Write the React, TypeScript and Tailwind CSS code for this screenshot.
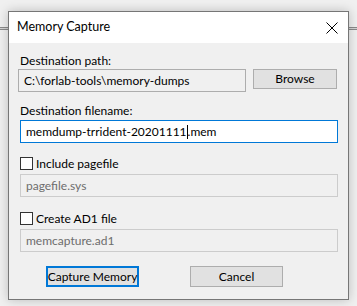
import React from "react";

const font = { fontFamily: 'Lato, "Noto Sans", sans-serif' };

function Checkbox({label}: {label: string}) {
	return (
		<label className="flex items-center h-[13px] text-[12px] text-black">
			<span className="w-[13px] h-[13px] border border-[#333333] bg-white box-border"/>
			<span className="ml-[3px] leading-[13px]">{label}</span>
		</label>
	);
}

function DisabledField({value}: {value: string}) {
	return (
		<div className="ml-[11px] w-[318px] h-[23px] border border-[#cccccc] bg-[#f0f0f0] flex items-center pl-[5px] text-[12px] text-[#6d6d6d]">
			{value}
		</div>
	);
}

export default function App() {
	return (
		<div
			className="w-[357px] h-[306px] overflow-hidden pt-[11px] pl-[8px] bg-[#f0f0f0] bg-[linear-gradient(to_bottom,transparent_27px,#8a8a8a_27px,#8a8a8a_28px,#d4d4d4_28px,#d4d4d4_29px,#8a8a8a_29px,#8a8a8a_30px,transparent_30px)]"
			style={font}
		>
			<div className="w-[341px] h-[289px] border border-[#767676] bg-[#f0f0f0] shadow-[0_0_10px_rgba(0,0,0,0.22)] flex flex-col">
				<div className="h-[31px] bg-white flex items-center justify-between pl-[8px] pr-[8px]">
					<span className="text-[12.5px] text-black">Memory Capture</span>
					<svg width="12" height="12" viewBox="0 0 12 12" className="mr-[2px]">
						<path d="M0.5 0.5 L11.5 11.5 M11.5 0.5 L0.5 11.5" stroke="#000" strokeWidth="1"/>
					</svg>
				</div>
				<div className="flex flex-col text-[12px] text-black">
					<div className="mt-[10px] ml-[11px] h-[16px] leading-[16px]">Destination path:</div>
					<div className="flex items-start">
						<div className="ml-[9px] w-[228px] h-[23px] border border-[#adadad] bg-[#f0f0f0] flex items-center pl-[5px]">
							C:\forlab-tools\memory-dumps
						</div>
						<button className="ml-[7px] w-[84px] h-[20px] border border-[#adadad] bg-[#e1e1e1] text-[12px] text-black">
							Browse
						</button>
					</div>
					<div className="mt-[11px] ml-[11px] h-[17px] leading-[16px]">Destination filename:</div>
					<div className="ml-[11px] w-[318px] h-[23px] border border-[#0078d7] bg-white flex items-center pl-[5px]">
						<span>memdump-trrident-20201111</span>
						<span className="w-px h-[14px] bg-black"/>
						<span>.mem</span>
					</div>
					<div className="mt-[14px] ml-[11px]">
						<Checkbox label="Include pagefile"/>
					</div>
					<div className="mt-[4px]">
						<DisabledField value="pagefile.sys"/>
					</div>
					<div className="mt-[15px] ml-[11px]">
						<Checkbox label="Create AD1 file"/>
					</div>
					<div className="mt-[4px]">
						<DisabledField value="memcapture.ad1"/>
					</div>
					<div className="mt-[14px] flex">
						<button className="ml-[37px] w-[93px] h-[21px] border border-[#0078d7] bg-[#e1e1e1] text-[12px] text-black whitespace-nowrap shadow-[inset_0_0_0_1px_#0078d7]">
							Capture Memory
						</button>
						<button className="ml-[51px] w-[93px] h-[21px] border border-[#adadad] bg-[#e1e1e1] text-[12px] text-black whitespace-nowrap">
							Cancel
						</button>
					</div>
				</div>
			</div>
		</div>
	);
}
